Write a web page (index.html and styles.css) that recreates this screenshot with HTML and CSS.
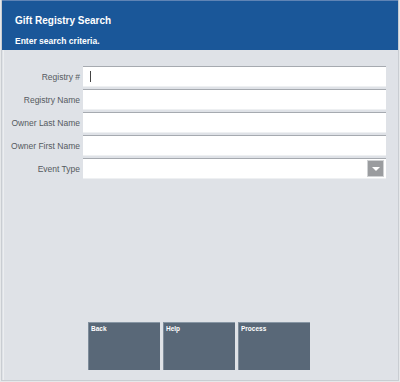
FILE: index.html
```html
<!DOCTYPE html>
<html lang="en">
<head>
  <meta charset="UTF-8" />
  <title>Gift Registry Search</title>
  <link rel="stylesheet" href="styles.css">
</head>
<body>
  <div class="screen">
    <div class="header">
      <h1>Gift Registry Search</h1>
      <p>Enter search criteria.</p>
    </div>

    <div class="content">
      <div class="form">
        <label>Registry #</label>
        <div class="field"><span class="caret"></span></div>
        <label>Registry Name</label>
        <div class="field"></div>
        <label>Owner Last Name</label>
        <div class="field"></div>
        <label>Owner First Name</label>
        <div class="field"></div>
        <label>Event Type</label>
        <div class="field select">
          <span class="drop"><span class="arrow"></span></span>
        </div>
      </div>

      <div class="actions">
        <button>Back</button>
        <button>Help</button>
        <button>Process</button>
      </div>
    </div>
  </div>
</body>
</html>
```

FILE: styles.css
```css
body {
  margin: 0;
  font-family: "Liberation Sans", Arial, sans-serif;
  background-color: #e6e8ea;
}
.screen {
  width: 396px;
  height: 380px;
  margin-left: 1px;
  border: 1px solid #c9cdd2;
  border-top: 0;
  display: flex;
  flex-direction: column;
  background-color: #dfe2e7;
}
.header {
  height: 50px;
  background-color: #1a5799;
  border-top: 1px solid #5f84b5;
  color: #fff;
  padding-left: 13px;
  box-sizing: border-box;
}
.header h1 {
  margin: 0;
  padding-top: 14px;
  font-size: 10px;
  font-weight: bold;
}
.header p {
  margin: 10px 0 0;
  font-size: 8.5px;
  font-weight: bold;
}
.content {
  flex: 1;
  display: flex;
  flex-direction: column;
  border-left: 1px solid #eceef0;
  margin-left: 1px;
}
.form {
  display: grid;
  grid-template-columns: 76px 303px;
  column-gap: 3px;
  row-gap: 2px;
  margin-top: 16px;
  align-items: center;
}
.form label {
  text-align: right;
  font-size: 8.5px;
  color: #555a60;
}
.field {
  height: 21px;
  background-color: #fff;
  border-top: 1px solid #a6aab0;
  border-bottom: 1px solid #eef0f2;
  box-sizing: border-box;
  display: flex;
  align-items: center;
}
.caret {
  width: 1px;
  height: 11px;
  background-color: #444;
  margin-left: 7px;
}
.select {
  justify-content: flex-end;
}
.drop {
  width: 17px;
  height: 17px;
  margin-right: 2px;
  background-color: #9a9c9f;
  border: 1px solid #d0d2d4;
  box-sizing: border-box;
  display: flex;
  align-items: center;
  justify-content: center;
}
.arrow {
  width: 0;
  height: 0;
  border-left: 4px solid transparent;
  border-right: 4px solid transparent;
  border-top: 4px solid #fff;
}
.actions {
  margin-top: auto;
  margin-bottom: 10px;
  margin-left: 84px;
  display: flex;
  gap: 3px;
}
.actions button {
  width: 72px;
  height: 48px;
  background-color: #596878;
  border: 0;
  border-top: 1px solid #8796a4;
  border-left: 1px solid #7e8c9a;
  color: #fff;
  font-family: "Liberation Sans", Arial, sans-serif;
  font-size: 6.5px;
  font-weight: bold;
  text-align: left;
  padding: 2px 2px 0;
  display: flex;
  align-items: flex-start;
}
```
